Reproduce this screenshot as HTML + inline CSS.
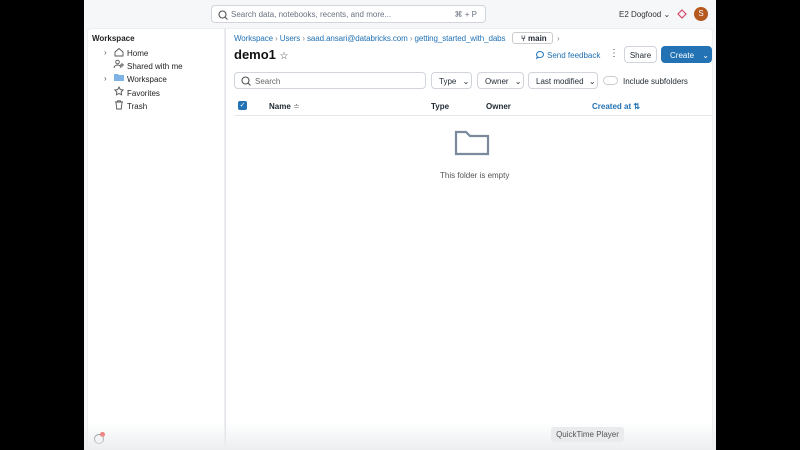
<!DOCTYPE html>
<html><head><style>
*{margin:0;padding:0;box-sizing:border-box}
body{width:800px;height:450px;background:#000;font-family:"Liberation Sans",sans-serif;position:relative;overflow:hidden;color:#1f2933}
.app{position:absolute;left:84px;top:0;width:632px;height:450px;background:#f6f7f9}
.abs{position:absolute}
.search{left:127px;top:5px;width:275px;height:18px;border:1px solid #d1d5db;border-radius:4px;background:#fff;font-size:8px;color:#6b7280;padding:4px 0 0 19px}
.side{left:3px;top:28px;width:138px;height:422px;background:#fff;border:1px solid #eceef0;border-radius:4px 0 0 0}
.main{left:141px;top:28px;width:488px;height:422px;background:#fff;border:1px solid #eceef0;border-left:1px solid #e0e3e7;border-radius:0 4px 0 0}
.t8{font-size:8px}
.link{color:#2272b4}
.btn{border:1px solid #d1d5db;border-radius:4px;background:#fff;font-size:8px;height:17px;padding-top:4px}
</style></head><body>
<div class="app">
<div class="abs search">Search data, notebooks, recents, and more...<span style="position:absolute;right:8px;top:4px">⌘ + P</span>
<svg class="abs" style="left:6px;top:4px" width="10" height="10"><circle cx="4.5" cy="4.5" r="3.5" fill="none" stroke="#555" stroke-width="1.1"/><line x1="7" y1="7" x2="9.5" y2="9.5" stroke="#555" stroke-width="1.1"/></svg></div>
<div class="abs t8" style="left:535px;top:10px;color:#333">E2 Dogfood ⌄</div>
<svg class="abs" style="left:593px;top:9px" width="10" height="10"><path d="M5 1L9 5L5 9L1 5Z" fill="none" stroke="#d04a6a" stroke-width="1.2"/></svg>
<div class="abs" style="left:610px;top:7px;width:14px;height:14px;border-radius:50%;background:#b5591f;color:#fff;font-size:8px;text-align:center;line-height:14px">S</div>

<div class="abs side">
<div class="abs" style="left:4px;top:5px;font-size:8px;font-weight:bold;color:#222">Workspace</div>
<div class="abs t8" style="left:16px;top:17px;line-height:13.2px;color:#555">›<br>&nbsp;<br>›</div>
<svg class="abs" style="left:25px;top:17px" width="12" height="70" fill="none" stroke="#555" stroke-width="0.9">
<path d="M2 6L6 2.5L10 6V10H2Z"/>
<circle cx="4.5" cy="16" r="1.8"/><path d="M1 22c0-2 2-3 3.5-3s3.5 1 3.5 3"/><path d="M9 17v4M7 19h4"/>
<path d="M1 28h4l1 1h5v6H1Z" fill="#7fb2e5" stroke="none"/>
<path d="M6 41l1.3 2.6 2.8.4-2 2 .5 2.8L6 47.5 3.4 48.8l.5-2.8-2-2 2.8-.4Z"/>
<path d="M2 56h8M3 56l.7 7h4.6L9 56M4.5 56v-1.2h3V56"/>
</svg>
<div class="abs t8" style="left:39px;top:18px;line-height:13.2px;color:#222">Home<br>Shared with me<br>Workspace<br>Favorites<br>Trash</div>
<div class="abs" style="left:6px;top:405px;width:10px;height:10px;border:1px solid #555;border-radius:50%"></div>
<div class="abs" style="left:12px;top:403px;width:5px;height:5px;border-radius:50%;background:#e33"></div>
</div>

<div class="abs main">
<div class="abs t8 link" style="left:8px;top:5px;white-space:nowrap;letter-spacing:-0.1px">Workspace <span style="color:#888">›</span> Users <span style="color:#888">›</span> saad.ansari@databricks.com <span style="color:#888">›</span> getting_started_with_dabs</div>
<div class="abs t8" style="left:286px;top:3px;width:41px;height:12px;border:1px solid #ccc;border-radius:3px;padding:1px 0 0 8px;font-weight:bold">⑂ main</div>
<div class="abs t8" style="left:331px;top:5px;color:#888">›</div>
<div class="abs" style="left:8px;top:18px;font-size:13px;font-weight:bold;color:#111">demo1 <span style="font-size:10px;font-weight:normal;color:#444">☆</span></div>
<svg class="abs" style="left:309px;top:21px" width="10" height="10"><path d="M5 1.5a3.5 3 0 1 1 -1.5 5.7L1.8 8.3l.5-2A3.5 3 0 0 1 5 1.5Z" fill="none" stroke="#2272b4" stroke-width="1"/></svg>
<div class="abs t8 link" style="left:321px;top:22px">Send feedback</div>
<div class="abs" style="left:383px;top:19px;font-size:10px;color:#444">⋮</div>
<div class="abs btn" style="left:398px;top:17px;width:33px;text-align:center">Share</div>
<div class="abs btn" style="left:435px;top:17px;width:51px;background:#2272b4;border-color:#2272b4;color:#fff;padding-left:8px">Create <span style="margin-left:6px">⌄</span></div>

<div class="abs btn" style="left:8px;top:43px;width:192px;color:#666;padding-left:20px">Search
<svg class="abs" style="left:6px;top:3px" width="10" height="10"><circle cx="4.5" cy="4.5" r="3.5" fill="none" stroke="#555" stroke-width="1.1"/><line x1="7" y1="7" x2="9.5" y2="9.5" stroke="#555" stroke-width="1.1"/></svg></div>
<div class="abs btn" style="left:205px;top:43px;width:41px;padding-left:7px">Type <span style="margin-left:4px">⌄</span></div>
<div class="abs btn" style="left:251px;top:43px;width:47px;padding-left:7px">Owner <span style="margin-left:4px">⌄</span></div>
<div class="abs btn" style="left:302px;top:43px;width:70px;padding-left:7px">Last modified <span style="margin-left:3px">⌄</span></div>
<div class="abs" style="left:377px;top:47px;width:15px;height:9px;border:1px solid #ccc;border-radius:5px"></div>
<div class="abs t8" style="left:397px;top:48px">Include subfolders</div>

<div class="abs" style="left:12px;top:72px;width:9px;height:9px;background:#2272b4;border-radius:2px;color:#fff;font-size:7px;text-align:center;line-height:9px">✓</div>
<div class="abs t8" style="left:43px;top:73px;font-weight:bold">Name <span style="font-weight:normal;color:#666">≐</span></div>
<div class="abs t8" style="left:205px;top:73px;font-weight:bold">Type</div>
<div class="abs t8" style="left:260px;top:73px;font-weight:bold">Owner</div>
<div class="abs t8 link" style="left:366px;top:73px;font-weight:bold">Created at ⇅</div>
<div class="abs" style="left:8px;top:86px;width:478px;height:1px;background:#e5e7eb"></div>

<svg class="abs" style="left:228px;top:100px" width="38" height="28"><path d="M2 3h10l4 4h18v18H2z" fill="none" stroke="#7a8a9c" stroke-width="2.2"/></svg>
<div class="abs t8" style="left:214px;top:142px;color:#555">This folder is empty</div>
</div>
<div class="abs" style="left:0;top:422px;width:632px;height:28px;background:linear-gradient(#fff0,#eceef0)"></div>
<div class="abs" style="left:467px;top:427px;width:73px;height:15px;background:#e9ebed;border-radius:3px;font-size:8px;color:#555;text-align:center;line-height:15px">QuickTime Player</div>
</div>
</body></html>
